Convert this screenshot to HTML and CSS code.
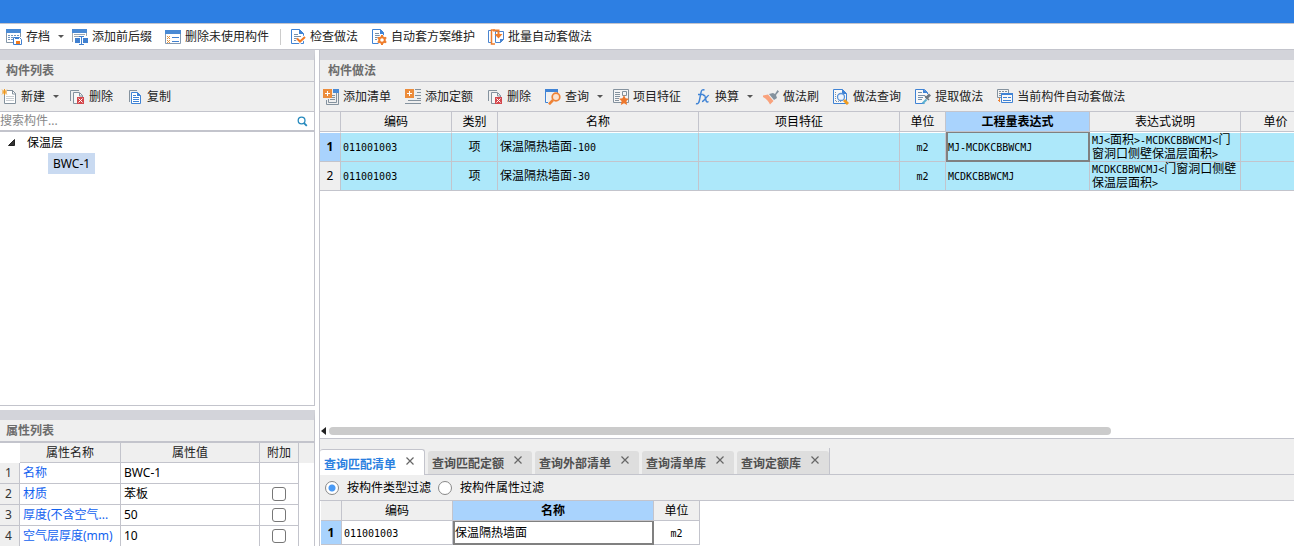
FILE: index.html
```html
<!DOCTYPE html>
<html lang="zh-CN">
<head>
<meta charset="utf-8">
<title>构件做法</title>
<link rel="stylesheet" href="styles.css">
</head>
<body>
<svg class="sprite" aria-hidden="true">
  <symbol id="i-save" viewBox="0 0 16 16">
    <path fill="#4a8ad4" d="M0 0h15v4H0z"/><path fill="none" stroke="#8496a8" d="M.5 4v9.500H7M14.500 4v4"/>
    <path stroke="#6f94bd" stroke-dasharray="2 1" d="M2 6.500h11M2 8.500h5M2 10.500h5"/>
    <path fill="#fff" stroke="#4080d0" d="M7.500 8.500h6l2 2v5h-8z"/><path fill="#f07a1c" d="M10 12h4v3h-4z"/><path fill="#4080d0" d="M9 9h4v1H9z"/>
  </symbol>
  <symbol id="i-affix" viewBox="0 0 16 16">
    <path fill="#4a8ad4" d="M0 0h15v4H0z"/><path fill="none" stroke="#a0a8b0" d="M.5 4v9M14.500 4v3M2 5.500h11M2 7.500h5"/>
    <path fill="#4080d0" d="M3 9h5v5H3zM11 9h5v5h-5z"/><path fill="none" stroke="#4080d0" d="M7 7.500h5M9.500 7v8M7 15.500h5"/>
  </symbol>
  <symbol id="i-unused" viewBox="0 0 16 16">
    <path fill="#fff" stroke="#8299b3" d="M.5 2.500h15v12H.5z"/><path fill="#4a8ad4" d="M0 1h16v4H0z"/>
    <path stroke="#e8953c" d="M2 7l3 3M5 7l-3 3M2 11l3 3M5 11l-3 3"/><path stroke="#4080d0" d="M7 8.500h7M7 12.500h7"/>
  </symbol>
  <symbol id="i-check" viewBox="0 0 16 16">
    <path fill="#fff" stroke="#3f83d5" d="M1.500.5h8l4 4v10h-12z"/><path fill="#3f83d5" d="M9 0v5h5z"/>
    <path stroke="#7790aa" d="M4 5.500h4M4 7.500h7M4 9.500h4M4 11.500h3"/><path fill="none" stroke="#fff" stroke-width="4" d="M7 9.500l3 3L15 8"/><path fill="none" stroke="#f27a24" stroke-width="2" d="M7 9.500l3 3L15 8"/>
  </symbol>
  <symbol id="i-plan" viewBox="0 0 16 16">
    <path fill="#fff" stroke="#3f83d5" d="M1.500.5h8l3 3v11h-11z"/><path fill="#3f83d5" d="M9 0v5h4V4z"/>
    <path stroke="#7790aa" d="M4 4.500h4M4 6.500h5M4 8.500h3M4 10.500h2"/><circle cx="11" cy="11" r="5" fill="#fff"/>
    <circle cx="11" cy="11" r="2.800" fill="none" stroke="#ee7e2d" stroke-width="2"/><path stroke="#ee7e2d" stroke-width="2" d="M11 6v2M11 14v2M6.700 8.500l1.800 1M13.500 12.500l1.800 1M6.700 13.500l1.800-1M13.500 9.500l1.800-1"/>
  </symbol>
  <symbol id="i-batch" viewBox="0 0 16 16">
    <path fill="none" stroke="#4a85d0" d="M3.500 1.500h-3v12h3"/><path fill="none" stroke="#ee7e2d" stroke-width="1.500" d="M7 1H3.500v14H7"/>
    <path fill="#fff" stroke="#4a85d0" d="M7.500 2.500h8v8l-3 3h-5z"/><path fill="#4a85d0" d="M12 14v-4h4z"/><path fill="none" stroke="#ee7e2d" stroke-width="2" d="M5 1.500h5.500V6"/><path fill="#ee7e2d" d="M6.500 5h8l-4 4.500z"/>
  </symbol>
  <symbol id="i-new" viewBox="0 0 16 16">
    <path fill="#fff" stroke="#84929e" d="M3.500 1.500h8l3 3v10h-11z"/><path fill="none" stroke="#84929e" d="M11.500 1v4H15"/>
    <path stroke="#c8cdd2" d="M5 7.500h8M5 9.500h8M5 11.500h8"/><path fill="#efefef" d="M1 0h5v6H1z"/><path stroke="#f0981c" d="M3.500 0v6M1 3h5M1.200.7l4.600 4.600M5.800.7L1.200 5.300"/>
  </symbol>
  <symbol id="i-del" viewBox="0 0 16 16">
    <path fill="none" stroke="#84929e" d="M1.500 12V1.500H10"/><path fill="#f6f6f6" stroke="#84929e" d="M4.500 3.500h6l3 3v8h-9z"/>
    <path fill="none" stroke="#84929e" d="M10.500 4v3H14"/><path fill="#d4484d" d="M8 8h7v7H8z"/><path stroke="#fff" d="M9.500 9.500l4 4M13.500 9.500l-4 4"/>
  </symbol>
  <symbol id="i-copy" viewBox="0 0 16 16">
    <path fill="none" stroke="#84929e" d="M2.500 13V1.500H10"/><path fill="#fff" stroke="#3f83d5" d="M4.500 3.500h6l3 3v8h-9z"/>
    <path fill="#3f83d5" d="M10 3v4h4z"/><path stroke="#3f83d5" d="M6 6.500h3M6 8.500h6M6 10.500h6M6 12.500h6"/>
  </symbol>
  <symbol id="i-list" viewBox="0 0 16 16">
    <path fill="none" stroke="#84929e" d="M15.500 4v11.500H3.500V11M13.500 4v9.500H5.500V10M8 6.500h4M9 8.500h3M7 10.500h5"/><path fill="#4a8ad4" d="M10 0h6v4h-6z"/>
    <path fill="#ec8c3b" d="M0 0h9v9H0z"/><path stroke="#fff" d="M2 4.500h5M4.500 2v5"/>
  </symbol>
  <symbol id="i-quota" viewBox="0 0 16 16">
    <path stroke="#84929e" d="M10 .5h6M12 3.500h4M10 6.500h6M12 9.500h4M3 11.500h13M0 14.500h16"/><path fill="#ec8c3b" d="M0 0h9v9H0z"/><path stroke="#fff" d="M2 4.500h5M4.500 2v5"/>
  </symbol>
  <symbol id="i-query" viewBox="0 0 16 16">
    <path fill="#f6f6f6" stroke="#3f83d5" d="M.5 2v11.500H3M12.500 3v1"/><path fill="#3f83d5" d="M0 0h13v3H0z"/>
    <circle cx="11" cy="8" r="3.800" fill="#fbe3d0" stroke="#ee8236" stroke-width="1.700"/><path stroke="#ee8236" stroke-width="2.600" d="M8 11l-4 4.300"/>
  </symbol>
  <symbol id="i-feature" viewBox="0 0 16 16">
    <path fill="#f6f6f6" stroke="#84929e" d="M.5.5h15v13H.5z"/><path fill="none" stroke="#84929e" d="M2 3.500h5M2 5.500h5M2 7.500h5M2 9.500h4M2 11.500h4M9.500 2.500h4v4h-4z"/>
    <path fill="#ee782d" d="M11 6l1.500 3.300 3.500.4-2.600 2.400.7 3.900-3.100-1.800L7.900 16l.7-3.900L6 9.700l3.500-.4z"/>
  </symbol>
  <symbol id="i-fx" viewBox="0 0 16 16">
    <path fill="none" stroke="#3f83d5" stroke-width="1.400" d="M1 14.500c2 1 3-1 3.400-3L6 3.500C6.500.8 7.500.3 9.500 1M3 5.500h5.500M8 6.500c2-.8 2 .5 2.500 3s1 4.500 3 3M14 6.500c-1.500-.8-5 6.300-7 6"/>
  </symbol>
  <symbol id="i-brush" viewBox="0 0 16 16">
    <path fill="#84929e" d="M10 4l2 1 2.500-4L16 2.500 13 6l1 3-3 2-5-6z"/><path fill="#f9a27c" d="M0 6.500l5-1 5.500 6.500L7 15.500C5.500 12 3.500 10 0 8z"/>
  </symbol>
  <symbol id="i-mquery" viewBox="0 0 16 16">
    <path fill="#f8f8f8" stroke="#3f83d5" d="M.5.5h9l4 4v10H.5z"/><path fill="#3f83d5" d="M9 0v5h5z"/><circle cx="8" cy="8" r="3.500" fill="#eef5fd" stroke="#5a93d8" stroke-width="1.300"/>
    <path stroke="#8496a8" stroke-dasharray="1 1" d="M2.500 3v10M3 12.500h6"/><path stroke="#f09c20" stroke-width="3" d="M11 11l4 4"/>
  </symbol>
  <symbol id="i-extract" viewBox="0 0 16 16">
    <path fill="#f8f8f8" stroke="#3f83d5" d="M12.500 5V3.500l-3-3H.5v14h9"/><path fill="#3f83d5" d="M8 0v4h5z"/><path stroke="#7790aa" d="M3 3.500h4M3 6.500h7M3 8.500h5M3 10.500h4"/>
    <path stroke="#5bb0d0" stroke-width="2" d="M7.500 14.500l4-4"/><path stroke="#6d7780" stroke-width="3" d="M11 9.500l4-4"/><path stroke="#6d7780" stroke-width="1.500" d="M10 7l4 4"/>
  </symbol>
  <symbol id="i-auto" viewBox="0 0 16 16">
    <path fill="#f4f4f4" stroke="#84929e" d="M11.500 4V.5H.5v8H4"/><path stroke="#84929e" stroke-dasharray="2 1" d="M2 2.500h8M2 4.500h2M2 6.500h2"/><path fill="#f8f8f8" stroke="#3f83d5" d="M4.500 4.500h11v9h-11z"/>
    <path stroke="#3f83d5" stroke-width="2" d="M4 5h12"/><path stroke="#3f83d5" d="M6 8.500h4M6 11.500h8M11 8.500h3"/><path stroke="#ee8236" d="M2.500 9v4M1 11.500h2"/>
  </symbol>
</svg>

<div class="app">
  <header class="titlebar"></header>
  <nav class="toolbar main-tools" aria-label="主工具栏">
    <button class="tool has-menu"><svg><use href="#i-save"/></svg>存档<i class="caret"></i></button>
    <button class="tool"><svg><use href="#i-affix"/></svg>添加前后缀</button>
    <button class="tool"><svg><use href="#i-unused"/></svg>删除未使用构件</button>
    <span class="sep"></span>
    <button class="tool"><svg><use href="#i-check"/></svg>检查做法</button>
    <button class="tool"><svg><use href="#i-plan"/></svg>自动套方案维护</button>
    <button class="tool"><svg><use href="#i-batch"/></svg>批量自动套做法</button>
  </nav>

  <div class="workspace">
    <aside class="side">
      <section class="panel components">
        <h2 class="panel-title">构件列表</h2>
        <div class="toolbar side-tools">
          <button class="tool has-menu"><svg><use href="#i-new"/></svg>新建<i class="caret"></i></button>
          <button class="tool"><svg><use href="#i-del"/></svg>删除</button>
          <button class="tool"><svg><use href="#i-copy"/></svg>复制</button>
        </div>
        <div class="search">
          <input type="text" placeholder="搜索构件..." aria-label="搜索构件">
          <button class="search-btn" aria-label="搜索"><svg viewBox="0 0 12 12"><circle cx="5" cy="5" r="3.700" fill="none" stroke="#2589bd" stroke-width="1.400"/><path stroke="#2589bd" stroke-width="2" d="M7.700 7.700l3 3"/></svg></button>
        </div>
        <ul class="tree">
          <li><span class="node"><svg class="twisty" viewBox="0 0 7 7"><path d="M6.500.5v6h-6z" fill="#333" stroke="#222"/></svg>保温层</span>
            <ul><li><span class="leaf">BWC-1</span></li></ul>
          </li>
        </ul>
      </section>
      <section class="panel props">
        <h2 class="panel-title">属性列表</h2>
        <table class="prop-table">
          <colgroup><col class="c-pidx"><col class="c-pname"><col class="c-pval"><col class="c-padd"><col></colgroup>
          <thead><tr><th class="corner"></th><th>属性名称</th><th>属性值</th><th>附加</th><th class="rest"></th></tr></thead>
          <tbody>
            <tr><td class="idx">1</td><td class="name">名称</td><td>BWC-1</td><td></td><td class="rest"></td></tr>
            <tr><td class="idx">2</td><td class="name">材质</td><td>苯板</td><td class="mid"><input type="checkbox" aria-label="附加 材质"></td><td class="rest"></td></tr>
            <tr><td class="idx">3</td><td class="name">厚度(不含空气...</td><td>50</td><td class="mid"><input type="checkbox" aria-label="附加 厚度"></td><td class="rest"></td></tr>
            <tr><td class="idx">4</td><td class="name">空气层厚度(mm)</td><td>10</td><td class="mid"><input type="checkbox" aria-label="附加 空气层厚度"></td><td class="rest"></td></tr>
          </tbody>
        </table>
      </section>
    </aside>

    <main class="content">
      <section class="panel methods">
        <h2 class="panel-title">构件做法</h2>
        <div class="toolbar method-tools">
          <button class="tool"><svg><use href="#i-list"/></svg>添加清单</button>
          <button class="tool"><svg><use href="#i-quota"/></svg>添加定额</button>
          <button class="tool"><svg><use href="#i-del"/></svg>删除</button>
          <button class="tool has-menu"><svg><use href="#i-query"/></svg>查询<i class="caret"></i></button>
          <button class="tool"><svg><use href="#i-feature"/></svg>项目特征</button>
          <button class="tool has-menu"><svg><use href="#i-fx"/></svg>换算<i class="caret"></i></button>
          <button class="tool"><svg><use href="#i-brush"/></svg>做法刷</button>
          <button class="tool"><svg><use href="#i-mquery"/></svg>做法查询</button>
          <button class="tool"><svg><use href="#i-extract"/></svg>提取做法</button>
          <button class="tool"><svg><use href="#i-auto"/></svg>当前构件自动套做法</button>
        </div>
        <div class="grid-wrap">
          <table class="grid method-grid">
            <colgroup><col class="c-idx"><col class="c-code"><col class="c-unit"><col class="c-name"><col class="c-name"><col class="c-unit"><col class="c-expr"><col class="c-desc"><col class="c-price"></colgroup>
            <thead><tr><th class="idx"></th><th>编码</th><th>类别</th><th>名称</th><th>项目特征</th><th>单位</th><th class="current">工程量表达式</th><th>表达式说明</th><th>单价</th></tr></thead>
            <tbody>
              <tr><td class="idx current">1</td><td><span class="mono">011001003</span></td><td class="mid">项</td><td>保温隔热墙面<span class="mono">-100</span></td><td></td><td class="mid"><span class="mono">m2</span></td><td class="focus"><span class="mono">MJ-MCDKCBBWCMJ</span></td><td class="desc"><span class="mono">MJ&lt;</span>面积<span class="mono">&gt;-MCDKCBBWCMJ&lt;</span>门<br>窗洞口侧壁保温层面积<span class="mono">&gt;</span></td><td></td></tr>
              <tr><td class="idx">2</td><td><span class="mono">011001003</span></td><td class="mid">项</td><td>保温隔热墙面<span class="mono">-30</span></td><td></td><td class="mid"><span class="mono">m2</span></td><td><span class="mono">MCDKCBBWCMJ</span></td><td class="desc"><span class="mono">MCDKCBBWCMJ&lt;</span>门窗洞口侧壁<br>保温层面积<span class="mono">&gt;</span></td><td></td></tr>
            </tbody>
          </table>
        </div>
        <div class="hscroll"><svg class="arrow" viewBox="0 0 5 8"><path d="M5 0v8L0 4z" fill="#222"/></svg><div class="track"><div class="thumb"></div></div></div>
      </section>

      <section class="query">
        <div class="tabs" role="tablist">
          <div class="tab active" role="tab">查询匹配清单<button class="close" aria-label="关闭"><svg viewBox="0 0 8 8"><path d="M.5.5l7 7M7.500.5l-7 7"/></svg></button></div>
          <div class="tab" role="tab">查询匹配定额<button class="close" aria-label="关闭"><svg viewBox="0 0 8 8"><path d="M.5.5l7 7M7.500.5l-7 7"/></svg></button></div>
          <div class="tab" role="tab">查询外部清单<button class="close" aria-label="关闭"><svg viewBox="0 0 8 8"><path d="M.5.5l7 7M7.500.5l-7 7"/></svg></button></div>
          <div class="tab" role="tab">查询清单库<button class="close" aria-label="关闭"><svg viewBox="0 0 8 8"><path d="M.5.5l7 7M7.500.5l-7 7"/></svg></button></div>
          <div class="tab" role="tab">查询定额库<button class="close" aria-label="关闭"><svg viewBox="0 0 8 8"><path d="M.5.5l7 7M7.500.5l-7 7"/></svg></button></div>
          <span class="tabs-end"></span>
        </div>
        <div class="filters">
          <label><input type="radio" name="filter" checked>按构件类型过滤</label>
          <label><input type="radio" name="filter">按构件属性过滤</label>
        </div>
        <div class="result">
          <table class="grid result-grid">
            <colgroup><col class="c-idx"><col class="c-code"><col class="c-name"><col class="c-unit"></colgroup>
            <thead><tr><th class="idx"></th><th>编码</th><th class="current">名称</th><th>单位</th></tr></thead>
            <tbody><tr><td class="idx current">1</td><td><span class="mono">011001003</span></td><td class="focus">保温隔热墙面</td><td class="mid"><span class="mono">m2</span></td></tr></tbody>
          </table>
        </div>
      </section>
    </main>
  </div>
</div>
</body>
</html>
```

FILE: styles.css
```css
:root {
  --line: #c3c4cc;
  --chrome: #efefef;
  --band: #d3d4da;
  --select: #a9d3fd;
  --row: #ade8fa;
}

* { box-sizing: border-box; }

body {
  margin: 0;
  background: #fff;
  color: #000;
  font: 12px/18px "Noto Sans", "Noto Sans CJK SC", sans-serif;
}

button, input { font: inherit; color: inherit; }
button { margin: 0; padding: 0; border: 0; background: none; }
ul { margin: 0; padding: 0; list-style: none; }
.sprite { display: none; }

.app { display: flex; flex-direction: column; min-height: 100vh; }
.titlebar { height: 24px; background: #2d7fe3; border-bottom: 1px solid var(--line); }

/* Toolbars */
.toolbar { display: flex; align-items: center; gap: 14px; overflow: hidden; white-space: nowrap; color: #222; }
.tool { display: flex; flex: none; align-items: center; gap: 4px; }
.tool svg { width: 16px; height: 16px; }
.has-menu { margin-right: -4px; }
.caret { margin-left: 4px; border: 3px solid transparent; border-top-color: #555; border-bottom: 0; }
.main-tools { height: 26px; padding: 0 6px; gap: 13px; border-bottom: 1px solid var(--line); }
.main-tools .has-menu { margin-right: -5px; }
.sep { flex: none; width: 1px; height: 16px; margin: 0 -4px 0 -2px; background: #ccc; }
.side-tools, .method-tools { height: 30px; background: var(--chrome); border-bottom: 1px solid var(--line); }
.side-tools { padding-left: 1px; }
.method-tools { padding-left: 3px; }

/* Panels */
.workspace { display: flex; flex: 1; gap: 4px; }
.side { display: flex; flex: none; flex-direction: column; gap: 4px; width: 315px; }
.content { display: flex; flex: 1; flex-direction: column; min-width: 0; border-left: 1px solid var(--line); }
.panel { border-top: 10px solid var(--band); }
.panel-title {
  height: 22px;
  margin: 0;
  padding-left: 6px;
  background: var(--chrome);
  border-bottom: 1px solid var(--line);
  color: #6c6c6c;
  font-size: 12px;
  font-weight: 700;
  line-height: 21px;
}
.methods .panel-title { padding-left: 8px; }
.components { flex: 1; border-right: 1px solid var(--line); border-bottom: 1px solid var(--line); }
.props { height: 136px; overflow: hidden; border-right: 1px solid var(--line); }
.props .panel-title { height: 23px; border-bottom-width: 2px; }

.search { display: flex; height: 20px; border-bottom: 2px solid var(--line); }
.search input { flex: 1; min-width: 0; padding: 0; border: 0; outline: 0; }
.search input::placeholder { color: #888; opacity: 1; }
.search-btn { padding-right: 6px; }
.search-btn svg { display: block; width: 11px; height: 11px; }

.tree { line-height: 21px; }
.node { display: flex; align-items: center; gap: 12px; padding-left: 8px; }
.twisty { width: 7px; height: 7px; }
.tree ul { padding-left: 48px; }
.leaf { display: inline-block; padding: 0 5px; background: #c9daf1; }

/* Property table */
table { border-collapse: separate; border-spacing: 0; table-layout: fixed; }
th { font-weight: 400; }
th, td { padding: 0; border-right: 1px solid var(--line); border-bottom: 1px solid var(--line); }
.mid { text-align: center; }
.prop-table { width: 100%; }
.prop-table th { height: 20px; background: var(--chrome); color: #222; line-height: 19px; }
.prop-table td { height: 21px; padding-left: 3px; line-height: 20px; white-space: nowrap; }
.prop-table .corner { background: #fff; border-color: #fff; }
.prop-table .idx { padding-left: 5px; background: var(--chrome); color: #333; }
.prop-table .name { color: #1262f0; }
.prop-table .mid { padding: 0; }
.prop-table .rest { border-right: 0; }
.prop-table th.rest { border-bottom-color: var(--chrome); }
.prop-table td.rest { border-bottom: 0; }
.c-pidx { width: 20px; }
.c-pname { width: 101px; }
.c-pval { width: 139px; }
.c-padd { width: 39px; }
input[type="checkbox"] {
  appearance: none;
  display: block;
  width: 14px;
  height: 14px;
  margin: 0 auto;
  border: 1px solid #777;
  border-radius: 3px;
  background: #fff;
}

/* Data grids */
.methods { display: flex; flex: 1; flex-direction: column; }
.grid-wrap { flex: 1; overflow: hidden; }
.method-grid { width: 991px; }
.result-grid { width: 379px; }
.c-idx { width: 21px; }
.c-code { width: 111px; }
.c-unit { width: 46px; }
.c-name { width: 201px; }
.c-expr { width: 144px; }
.c-desc { width: 151px; }
.c-price { width: 70px; }
.grid th { height: 20px; background: var(--chrome); line-height: 19px; }
.grid th.current { background: var(--select); font-weight: 700; }
.grid td { padding-left: 2px; }
.grid .mid { padding-left: 0; }
.grid .idx { padding: 0; background: var(--chrome); text-align: center; }
.grid .idx.current { background: var(--select); font-weight: 700; }
.method-grid td { height: 29px; background: var(--row); }
.method-grid tbody tr:first-child td { height: 30px; border-top: 1px solid #fff; }
.grid .desc { line-height: 13px; white-space: nowrap; }
.method-grid tbody tr:first-child .focus,
.grid .focus { border: 2px solid #808080; border-top-width: 1px; padding-left: 0; }
.mono { font: 10px/12px "DejaVu Sans Mono", monospace; }

.hscroll { display: flex; align-items: center; gap: 3px; height: 15px; padding-left: 1px; border-bottom: 1px solid var(--line); }
.arrow { flex: none; width: 5px; height: 8px; }
.track { flex: 1; }
.thumb { width: 81%; height: 8px; border-radius: 4px; background: #cbcbcb; }

/* Query area */
.tabs { display: flex; align-items: flex-end; gap: 3px; height: 36px; padding-top: 9px; background: var(--chrome); border-bottom: 1px solid var(--line); }
.tab {
  display: flex;
  flex: none;
  gap: 10px;
  height: 23px;
  padding: 2px 10px 0 4px;
  border-radius: 3px 3px 0 0;
  background: #dedede;
  color: #505050;
  font-weight: 700;
  line-height: 21px;
}
.tab.active { height: 26px; margin-bottom: -1px; padding-top: 4px; border: 1px solid var(--line); border-width: 1px 1px 0 0; background: #fff; color: #2a7fe0; }
.close { width: 8px; height: 13px; }
.close svg { display: block; width: 8px; height: 8px; fill: none; stroke: #666; stroke-width: 1.2; }
.tabs-end { align-self: stretch; width: 1px; margin-left: -3px; background: var(--line); }

.filters { display: flex; align-items: center; gap: 7px; height: 26px; padding-left: 5px; background: var(--chrome); border-bottom: 1px solid var(--line); }
.filters label { display: flex; align-items: center; gap: 8px; }
input[type="radio"] {
  appearance: none;
  width: 14px;
  height: 14px;
  margin: 0;
  border: 1px solid #888;
  border-radius: 50%;
  background: #fff;
}
input[type="radio"]:checked { background: radial-gradient(circle, #4a9af5 0 3px, #fff 4px); }
.result { padding: 0 0 1px 1px; }
.result-grid td { height: 24px; }
```
